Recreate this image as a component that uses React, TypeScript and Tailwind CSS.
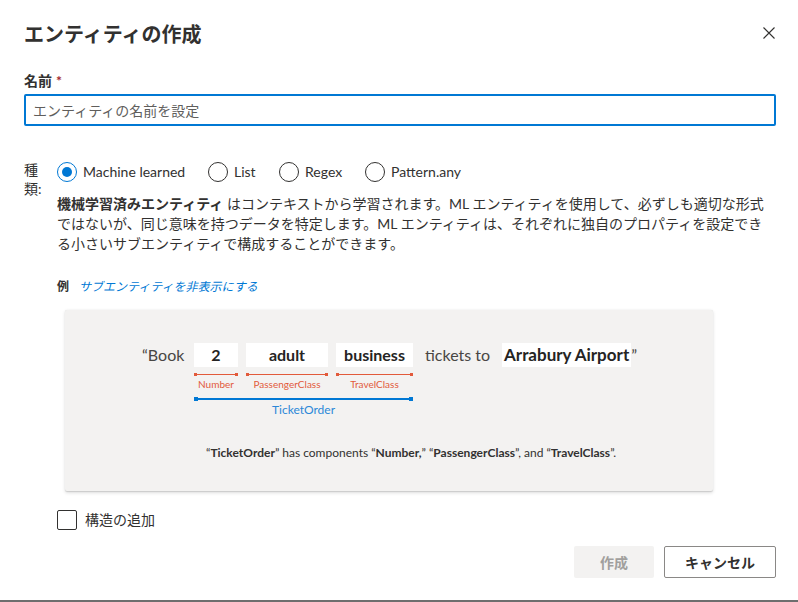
import React from "react";

function Radio({ label, checked, w }: { label: string; checked?: boolean; w: string }) {
  return (
    <div className={`flex items-center h-[20px] ${w}`}>
      <div
        className={`w-[20px] h-[20px] rounded-full border flex items-center justify-center shrink-0 ${
          checked ? "border-[#0078d4]" : "border-[#323130]"
        }`}
      >
        {checked && <div className="w-[10px] h-[10px] rounded-full bg-[#0078d4]" />}
      </div>
      <span className="ml-[6px] text-[14px] leading-[20px] whitespace-nowrap">{label}</span>
    </div>
  );
}

function RedLine() {
  return (
    <div className="relative h-[3px] mt-[6px] w-full">
      <div className="absolute left-0 right-0 top-[1px] h-px bg-[#e25a3b]" />
      <div className="absolute left-0 top-0 w-[3px] h-[3px] bg-[#e25a3b]" />
      <div className="absolute right-0 top-0 w-[3px] h-[3px] bg-[#e25a3b]" />
    </div>
  );
}

function Sub({ word, label, w }: { word: string; label: string; w: string }) {
  return (
    <div className={`flex flex-col items-center ${w}`}>
      <div className="w-full h-[24px] bg-white flex items-center justify-center text-[16px] font-bold text-[#252423] leading-[24px]">
        {word}
      </div>
      <RedLine />
      <div className="mt-[2px] text-[10px] leading-[12px] text-[#e25a3b] whitespace-nowrap">{label}</div>
    </div>
  );
}

export default function App() {
  return (
    <div className="w-[798px] h-[602px] bg-white flex flex-col text-[#323130] font-['Lato','Noto_Sans_CJK_JP',sans-serif]">
      {/* Header */}
      <div className="flex items-center justify-between pl-[24px] pr-[23px] pt-[20px] h-[48px]">
        <div className="text-[20px] leading-[28px] font-bold text-[#323130]">エンティティの作成</div>
        <svg width="12" height="12" viewBox="0 0 12 12" className="mt-[-2px]">
          <path d="M0.5 0.5 L11.5 11.5 M11.5 0.5 L0.5 11.5" stroke="#323130" strokeWidth="1.1" fill="none" />
        </svg>
      </div>

      <div className="px-[24px]">
        {/* Name */}
        <div className="mt-[23px] text-[14px] leading-[20px] font-bold">
          名前<span className="text-[#a4262c] ml-[4px]">*</span>
        </div>
        <div className="mt-[3px] w-[752px] h-[32px] border-2 border-[#0078d4] rounded-[2px] flex items-center px-[7px] text-[14px] text-[#605e5c]">
          エンティティの名前を設定
        </div>

        {/* Type */}
        <div className="mt-[34px] flex items-start">
          <div className="w-[33px] shrink-0 text-[14px] leading-[19px] text-[#323130]">
            種<br />類:
          </div>
          <div className="flex flex-col">
            <div className="flex items-center mt-[2px]">
              <Radio label="Machine learned" checked w="w-[151px]" />
              <Radio label="List" w="w-[71px]" />
              <Radio label="Regex" w="w-[86px]" />
              <Radio label="Pattern.any" w="w-[120px]" />
            </div>
            <div className="mt-[12px] text-[14px] leading-[20px] whitespace-nowrap">
              <span className="font-bold">機械学習済みエンティティ</span> はコンテキストから学習されます。ML エンティティを使用して、必ずしも適切な形式
              <br />
              ではないが、同じ意味を持つデータを特定します。ML エンティティは、それぞれに独自のプロパティを設定でき
              <br />
              る小さいサブエンティティで構成することができます。
            </div>
            <div className="mt-[25px] text-[12px] leading-[16px] flex items-center">
              <span className="font-bold">例</span>
              <span className="ml-[10px] italic text-[#0078d4]">サブエンティティを非表示にする</span>
            </div>

            {/* Example box */}
            <div className="mt-[15px] ml-[8px] w-[648px] h-[181px] bg-[#f3f2f1] rounded-[2px] shadow-[0_1.6px_3.6px_rgba(0,0,0,0.13),0_0.3px_0.9px_rgba(0,0,0,0.11)] flex flex-col pt-[33px]">
              <div className="flex items-start pl-[77px]">
                <div className="w-[41px] text-[16px] leading-[24px] text-[#484644] whitespace-nowrap">“Book</div>
                <div className="ml-[11px] flex flex-col">
                  <div className="flex gap-[8px]">
                    <Sub word="2" label="Number" w="w-[44px]" />
                    <Sub word="adult" label="PassengerClass" w="w-[82px]" />
                    <Sub word="business" label="TravelClass" w="w-[77px]" />
                  </div>
                  <div className="relative h-[4px] mt-[7px] w-full">
                    <div className="absolute left-0 right-0 top-[1px] h-[2px] bg-[#0078d4]" />
                    <div className="absolute left-0 top-0 w-[4px] h-[4px] bg-[#0078d4]" />
                    <div className="absolute right-0 top-0 w-[4px] h-[4px] bg-[#0078d4]" />
                  </div>
                  <div className="mt-[1px] text-center text-[12px] leading-[16px] text-[#2b88d8]">TicketOrder</div>
                </div>
                <div className="ml-[12px] w-[65px] text-[16px] leading-[24px] text-[#484644] whitespace-nowrap">tickets to</div>
                <div className="ml-[12px] h-[24px] bg-white flex items-center px-[2px] text-[17px] leading-[24px] font-bold text-[#252423] whitespace-nowrap">
                  Arrabury Airport
                </div>
                <div className="text-[16px] leading-[24px] text-[#484644]">”</div>
              </div>
              <div className="mt-[27px] pl-[141px] text-[12px] leading-[16px] text-[#323130] whitespace-nowrap">
                “<span className="font-bold">TicketOrder</span>” has components “<span className="font-bold">Number,</span>” “
                <span className="font-bold">PassengerClass</span>”, and “<span className="font-bold">TravelClass</span>”.
              </div>
            </div>

            {/* Checkbox */}
            <div className="mt-[19px] flex items-center">
              <div className="w-[20px] h-[20px] border border-[#323130] rounded-[2px]" />
              <span className="ml-[8px] text-[14px] leading-[20px]">構造の追加</span>
            </div>
          </div>
        </div>
      </div>

      {/* Buttons */}
      <div className="mt-[16px] flex justify-end pr-[22px] gap-[10px]">
        <div className="w-[80px] h-[32px] bg-[#f3f2f1] rounded-[2px] flex items-center justify-center text-[14px] font-bold text-[#a19f9d]">
          作成
        </div>
        <div className="w-[112px] h-[32px] border border-[#8a8886] rounded-[2px] bg-white flex items-center justify-center text-[14px] font-bold text-[#323130]">
          キャンセル
        </div>
      </div>

      <div className="mt-auto h-[2px] bg-[#6e6e6e]" />
    </div>
  );
}
